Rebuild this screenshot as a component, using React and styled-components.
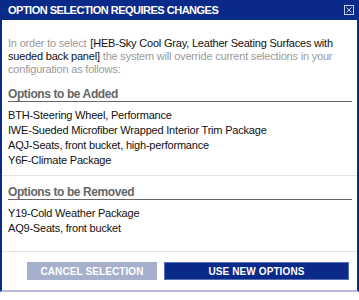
import React from "react";
import styled, { createGlobalStyle } from "styled-components";

const Global = createGlobalStyle`
  html, body { margin: 0; padding: 0; background: #ffffff; }
  body { font-family: "Liberation Sans", Arial, sans-serif; }
  * { box-sizing: border-box; }
`;

const BLUE = "#0a2a8a";

const Dialog = styled.div`
  width: 359px;
  background: #ffffff;
`;

const Header = styled.div`
  height: 20px;
  background: ${BLUE};
  display: flex;
  align-items: center;
  justify-content: space-between;
  padding: 0 5px 0 8px;
`;

const Title = styled.div`
  color: #ffffff;
  font-size: 11px;
  font-weight: bold;
  letter-spacing: -0.5px;
  line-height: 20px;
  white-space: nowrap;
`;

const CloseButton = styled.button`
  border: 0;
  padding: 0;
  margin: 0;
  background: transparent;
  width: 10px;
  height: 10px;
  display: flex;
  cursor: pointer;
`;

const Body = styled.div`
  border-left: 2px solid ${BLUE};
  border-right: 2px solid ${BLUE};
  border-bottom: 2px solid #b9bcd4;
  padding: 17px 5px 0 6px;
`;

const Intro = styled.p`
  margin: 0;
  font-size: 11px;
  line-height: 13px;
  letter-spacing: -0.2px;
  color: #9a9a9a;
  padding-right: 8px;
`;

const Selected = styled.span`
  color: #111111;
  margin: 0 3px 0 4px;
`;

const Section = styled.section`
  margin-top: ${(p) => p.$top}px;
`;

const SectionTitle = styled.h3`
  margin: 0;
  font-size: 12px;
  font-weight: bold;
  letter-spacing: -0.4px;
  line-height: 14px;
  color: #666666;
  border-bottom: 1px solid #666666;
`;

const ItemList = styled.ul`
  list-style: none;
  margin: 6px 0 0 0;
  padding: 0;
`;

const Item = styled.li`
  font-size: 11px;
  line-height: 15px;
  letter-spacing: -0.2px;
  color: #111111;
`;

const Divider = styled.hr`
  border: 0;
  border-top: 1px solid #e4e4e4;
  margin: ${(p) => p.$top}px -5px 0 -6px;
`;

const ButtonRow = styled.div`
  display: flex;
  justify-content: flex-end;
  gap: 7px;
  padding: 10px 3px 10px 0;
`;

const Button = styled.button`
  width: ${(p) => p.$width}px;
  height: 18px;
  border: 1px solid ${(p) => (p.$primary ? "#5a70b4" : "#a6b0cc")};
  background: ${(p) => (p.$primary ? BLUE : "#a6b0cc")};
  color: #ffffff;
  font-family: "Liberation Sans", Arial, sans-serif;
  font-size: 10px;
  font-weight: bold;
  letter-spacing: 0.1px;
  padding: 0;
  cursor: pointer;
`;

const CloseIcon = () => (
  <svg width="10" height="10" viewBox="0 0 10 10">
    <rect x="0.5" y="0.5" width="9" height="9" fill="none" stroke="#c9d0ec" strokeWidth="1" />
    <path d="M2.5 2.5 L7.5 7.5 M7.5 2.5 L2.5 7.5" stroke="#c9d0ec" strokeWidth="1" />
  </svg>
);

const added = [
  "BTH-Steering Wheel, Performance",
  "IWE-Sueded Microfiber Wrapped Interior Trim Package",
  "AQJ-Seats, front bucket, high-performance",
  "Y6F-Climate Package",
];

const removed = ["Y19-Cold Weather Package", "AQ9-Seats, front bucket"];

export default function App() {
  return (
    <>
      <Global />
      <Dialog>
        <Header>
          <Title>OPTION SELECTION REQUIRES CHANGES</Title>
          <CloseButton aria-label="Close">
            <CloseIcon />
          </CloseButton>
        </Header>
        <Body>
          <Intro>
            In order to select
            <Selected>
              [HEB-Sky Cool Gray, Leather Seating Surfaces with sueded back panel]
            </Selected>
            the system will override current selections in your configuration as follows:
          </Intro>
          <Section $top={11}>
            <SectionTitle>Options to be Added</SectionTitle>
            <ItemList>
              {added.map((t) => (
                <Item key={t}>{t}</Item>
              ))}
            </ItemList>
          </Section>
          <Divider $top={7} />
          <Section $top={9}>
            <SectionTitle>Options to be Removed</SectionTitle>
            <ItemList>
              {removed.map((t) => (
                <Item key={t}>{t}</Item>
              ))}
            </ItemList>
          </Section>
          <Divider $top={15} />
          <ButtonRow>
            <Button $width={130}>CANCEL SELECTION</Button>
            <Button $width={185} $primary>
              USE NEW OPTIONS
            </Button>
          </ButtonRow>
        </Body>
      </Dialog>
    </>
  );
}
